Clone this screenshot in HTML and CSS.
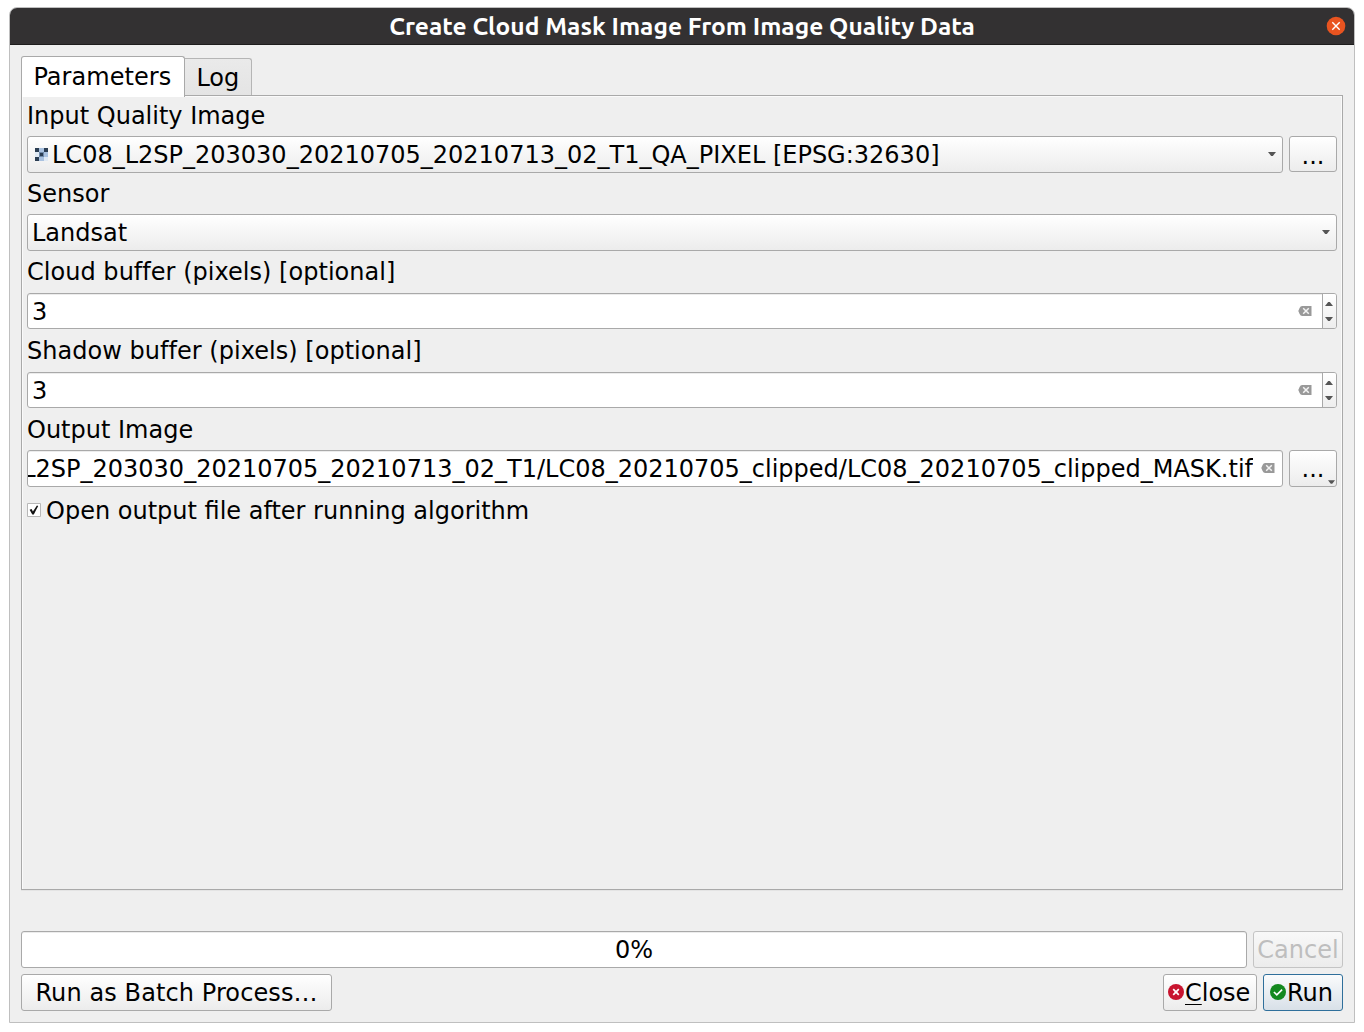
FILE: index.html
```html
<!DOCTYPE html>
<html lang="en">
<head>
<meta charset="utf-8">
<title>Create Cloud Mask Image From Image Quality Data</title>
<link rel="stylesheet" href="styles.css">
</head>
<body>
<svg class="defs" width="0" height="0">
  <symbol id="clear" viewBox="0 0 14 12"><path d="M4.2 1H13.5V11H4.2Q2.4 11 1.6 9L.3 6l1.3-3Q2.4 1 4.2 1z" fill="#999"/><path d="M5.2 3.2l5.6 5.6M10.8 3.2L5.2 8.8" stroke="#f4f4f4" stroke-width="1.5"/></symbol>
  <symbol id="down" viewBox="0 0 8 4"><path d="M0 0h8L4.8 4H3.2z" fill="#555"/></symbol>
  <symbol id="up" viewBox="0 0 8 4"><path d="M0 4h8L4.8 0H3.2z" fill="#555"/></symbol>
</svg>
<div class="window">
  <header class="titlebar">
    <h1 class="title">Create Cloud Mask Image From Image Quality Data</h1>
    <svg class="window-close" viewBox="0 0 20 20"><circle cx="10" cy="10" r="9.3" fill="#e95420"/><path d="M6.3 6.3l7.4 7.4M13.7 6.3l-7.4 7.4" stroke="#fff" stroke-width="1.4"/></svg>
  </header>
  <main class="content">
    <nav class="tabs">
      <div class="tab active">Parameters</div>
      <div class="tab">Log</div>
    </nav>
    <section class="panel">
      <label class="label first">Input Quality Image</label>
      <div class="row">
        <div class="box combo layer">
          <svg class="raster" viewBox="0 0 13 13" shape-rendering="crispEdges">
            <path d="M0 4h4v5H0zM9 9h4v4H9z" fill="#dfe9f4"/>
            <path d="M4 0h5v4H4zM9 4h4v5H9zM4 9h5v4H4zM4 4h5v5H4z" fill="#a9c1df"/>
            <path d="M0 0h4v4H0zM9 0h4v4H9zM0 9h4v4H0z" fill="#2b3d52"/>
            <path d="M4 4h5v5H4z" fill="#6f89a8"/><path d="M5 5h3v3H5z" fill="#2b3d52"/>
          </svg>
          <span class="value">LC08_L2SP_203030_20210705_20210713_02_T1_QA_PIXEL [EPSG:32630]</span>
          <svg class="arrow"><use href="#down"/></svg>
        </div>
        <div class="box browse short">...</div>
      </div>
      <label class="label">Sensor</label>
      <div class="box combo"><span class="value">Landsat</span><svg class="arrow"><use href="#down"/></svg></div>
      <label class="label cloud">Cloud buffer (pixels) [optional]</label>
      <div class="box field spin"><span class="value">3</span><svg class="clear"><use href="#clear"/></svg>
        <div class="steps"><svg class="arrow"><use href="#up"/></svg><svg class="arrow"><use href="#down"/></svg></div></div>
      <label class="label shadow">Shadow buffer (pixels) [optional]</label>
      <div class="box field spin"><span class="value">3</span><svg class="clear"><use href="#clear"/></svg>
        <div class="steps"><svg class="arrow"><use href="#up"/></svg><svg class="arrow"><use href="#down"/></svg></div></div>
      <label class="label output">Output Image</label>
      <div class="row">
        <div class="box field path"><div class="clip"><span>L2SP_203030_20210705_20210713_02_T1/LC08_20210705_clipped/LC08_20210705_clipped_MASK.tif</span></div><svg class="clear"><use href="#clear"/></svg></div>
        <div class="box browse">...<svg class="menu-arrow"><use href="#down"/></svg></div>
      </div>
      <div class="check-row">
        <svg class="check" viewBox="0 0 14 14"><path d="M.5.5h13v13H.5z" fill="#fff" stroke="#b8b8b8"/><path d="M2.6 6.8l2-.8 1.3 2.6L9.9 2.6l1.3.3L6.8 11.5H5.3z" fill="#111"/></svg>
        <span>Open output file after running algorithm</span>
      </div>
    </section>
    <div class="progress-row">
      <div class="box field progress">0%</div>
      <div class="box button disabled">Cancel</div>
    </div>
    <footer class="actions">
      <div class="box button batch">Run as Batch Process…</div>
      <div class="box button close"><svg class="icon" viewBox="0 0 16 16"><circle cx="8" cy="8" r="8" fill="#c8142f"/><path d="M5.2 5.2l5.6 5.6M10.8 5.2l-5.6 5.6" stroke="#fff" stroke-width="1.7"/></svg><span><span class="mnemonic">C</span>lose</span></div>
      <div class="box button run"><svg class="icon" viewBox="0 0 16 16"><circle cx="8" cy="8" r="8" fill="#14891f"/><path d="M3.9 8l2.9 2.8 5.3-5.2" fill="none" stroke="#fff" stroke-width="1.6"/></svg><span>Run</span></div>
    </footer>
  </main>
</div>
</body>
</html>
```
FILE: styles.css
```css
* { box-sizing: border-box; }
body {
  margin: 0;
  padding: 7px 9px 9px;
  height: 1032px;
  background: #fff;
  color: #000;
  font: 24px/28px "DejaVu Sans", sans-serif;
  white-space: nowrap;
  overflow: hidden;
}
svg { display: block; flex: none; }
.defs { position: absolute; }
.window {
  width: 1346px;
  height: 1016px;
  border: 1px solid #bfbfbf;
  border-radius: 8px 8px 0 0;
  background: #efefef;
  overflow: hidden;
}
.titlebar {
  display: grid;
  grid-template-columns: 36px 1fr 36px;
  align-items: center;
  height: 37px;
  background: #333132;
  border-bottom: 1px solid #1e1d1d;
}
.title {
  grid-column: 2;
  margin: 0;
  text-align: center;
  color: #fff;
  font: bold 24.55px/36px Ubuntu, "Noto Sans", sans-serif;
}
.window-close { width: 20px; height: 20px; justify-self: center; }
.content { padding: 11px 11px 0; }
.tabs { display: flex; align-items: flex-end; height: 39px; }
.tab {
  height: 37px;
  width: 67px;
  padding: 5px 0 0 11.4px;
  border: 1px solid #b5b5b5;
  border-left: 0;
  border-bottom: 0;
  border-radius: 0 3px 0 0;
  background: linear-gradient(#eaeaea, #e4e4e4);
}
.tab.active {
  position: relative;
  z-index: 1;
  width: 164px;
  height: 41px;
  margin-bottom: -2px;
  padding: 6px 0 0 11.4px;
  letter-spacing: 0.05px;
  border: 1px solid #a9a9a9;
  border-bottom: 0;
  border-radius: 3px 3px 0 0;
  background: #fff;
}
.panel {
  height: 795px;
  padding: 0 5px;
  border: 1px solid #a9a9a9;
  box-shadow: inset 1px 1px #fafafa, inset -1px 0 #fafafa, 0 1px #e4e4e4;
}
.label { display: block; padding: 7px 0 6px; }
.label.first { padding-top: 6px; }
.label.cloud { padding-bottom: 7px; letter-spacing: 0.03px; }
.label.shadow { padding: 8px 0 7px; letter-spacing: 0.03px; }
.label.output { padding-top: 8px; }
.row { display: flex; gap: 6px; }
.box {
  display: flex;
  align-items: center;
  height: 37px;
  border: 1px solid #a9a9a9;
  border-radius: 3px;
  background: linear-gradient(#fff, #ececec);
}
.field { background: #fff; box-shadow: inset 0 1px #ececec; }
.value { flex: 1; }
.arrow { width: 8px; height: 4px; }
.combo { padding: 0 6.5px 0 4px; }
.combo .arrow { margin-bottom: 1px; }
.combo.layer { flex: 1; padding-left: 7px; }
.raster { width: 13px; height: 13px; margin-right: 4px; }
.spin { height: 36px; padding-left: 4px; }
.spin .value { padding-top: 2px; }
.clear { width: 14px; height: 12px; }
.steps {
  display: flex;
  flex-direction: column;
  align-items: flex-start;
  justify-content: center;
  gap: 11px;
  width: 14px;
  height: 100%;
  margin-left: 10px;
  padding-left: 2px;
  border-left: 1px solid #a9a9a9;
  border-radius: 0 2px 2px 0;
  background: linear-gradient(#fff, #eee);
}
.browse { position: relative; width: 48px; justify-content: center; padding-top: 1px; }
.browse.short { height: 36px; padding-top: 3px; }
.menu-arrow { position: absolute; right: 1px; bottom: 2px; width: 7px; height: 4px; }
.path { flex: 1; min-width: 0; padding-right: 7px; }
.path .clear { margin-bottom: 1px; }
.clip { display: flex; justify-content: flex-end; flex: 1; min-width: 0; overflow: hidden; margin-right: 8px; }
.check-row { display: flex; align-items: center; gap: 5px; margin-top: 9px; }
.check-row span { padding-top: 1px; }
.check { width: 14px; height: 14px; margin-bottom: 1px; }
.progress-row { display: flex; gap: 6px; margin-top: 41px; }
.progress { flex: 1; justify-content: center; }
.button { justify-content: center; }
.disabled { width: 90px; color: #bebebe; border-color: #c4c4c4; background: linear-gradient(#f8f8f8, #ececec); }
.actions { display: flex; gap: 6px; margin-top: 6px; }
.batch { width: 311px; margin-right: auto; letter-spacing: 0.1px; }
.close { width: 94px; justify-content: flex-start; padding-left: 4px; }
.run { width: 80px; justify-content: flex-start; padding-left: 6px; border-color: #2f6f9b; background: linear-gradient(#fafbfc, #d8e0e8); }
.icon { width: 16px; height: 16px; margin: 0 1px 1px 0; }
.mnemonic { text-decoration: underline; text-decoration-thickness: 1px; text-underline-offset: 3px; }
```
